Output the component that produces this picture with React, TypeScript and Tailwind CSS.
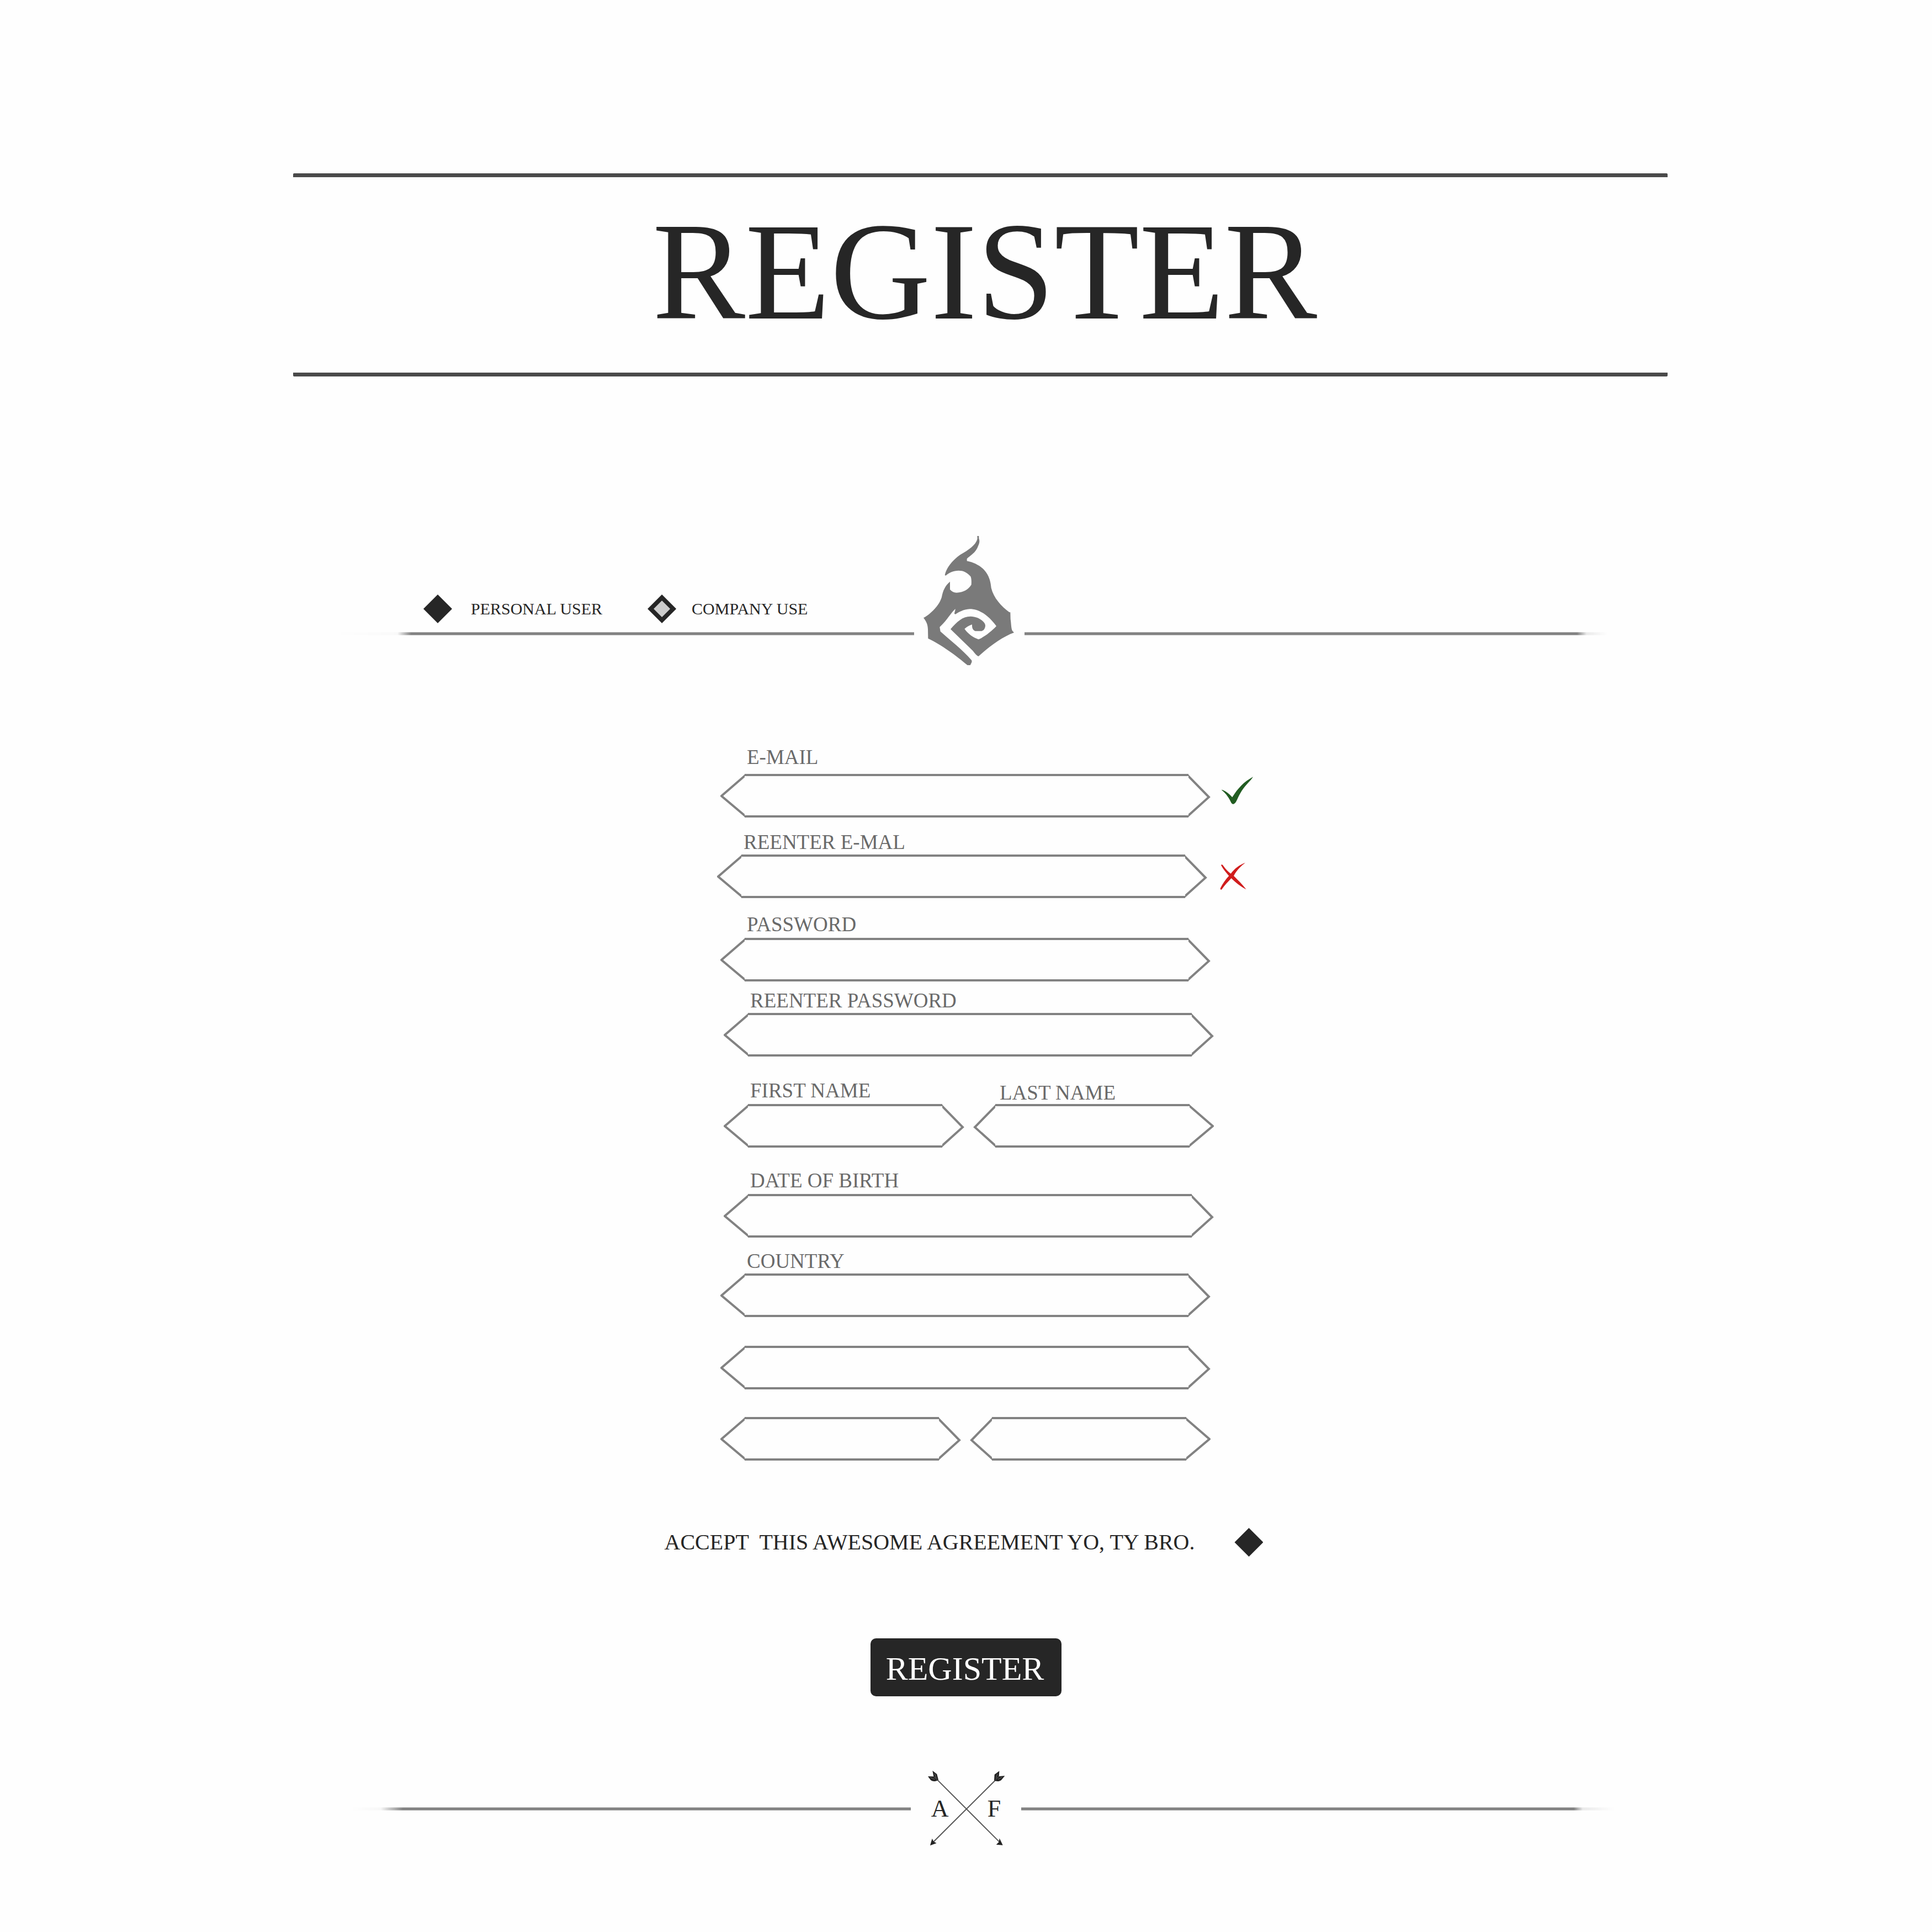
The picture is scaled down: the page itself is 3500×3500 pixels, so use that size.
import type { ReactNode } from "react";

const DIAMOND =
  "grid size-[52px] shrink-0 cursor-pointer appearance-none place-content-center bg-[#262626] [clip-path:polygon(50%_0,100%_50%,50%_100%,0_50%)] before:size-[30px] before:bg-[#cccccc] before:[clip-path:polygon(50%_0,100%_50%,50%_100%,0_50%)] checked:before:hidden";

const LABEL = "block h-10 pl-12 text-[37px] leading-10 text-[#6a6a6a]";

/* Pointed end cap of a field; the wide cap is 44px, the narrow one 40px. */
function WideCap({ flip }: { flip?: boolean }) {
  return (
    <svg
      viewBox="0 0 44 79"
      className={flip ? "h-[79px] w-11 shrink-0 -scale-x-100" : "h-[79px] w-11 shrink-0"}
      fill="none"
      stroke="#828282"
      strokeWidth="4"
      aria-hidden="true"
    >
      <path d="M46 2 L2 40 L46 77" />
    </svg>
  );
}

function NarrowCap({ flip }: { flip?: boolean }) {
  return (
    <svg
      viewBox="0 0 40 79"
      className={flip ? "h-[79px] w-10 shrink-0" : "h-[79px] w-10 shrink-0 -scale-x-100"}
      fill="none"
      stroke="#828282"
      strokeWidth="4"
      aria-hidden="true"
    >
      <path d="M42 2 L3 42 L42 77" />
    </svg>
  );
}

type FieldProps = { id: string; name: string; type?: string; mirrored?: boolean };

function HexInput({ id, name, type = "text", mirrored }: FieldProps) {
  return (
    <div className="flex w-full shrink-0">
      {mirrored ? <NarrowCap flip /> : <WideCap />}
      <input
        id={id}
        name={id}
        type={type}
        aria-label={name}
        className="h-[79px] min-w-0 flex-1 border-y-[4px] border-[#828282] bg-transparent text-[37px] text-[#262626] outline-none"
      />
      {mirrored ? <WideCap flip /> : <NarrowCap />}
    </div>
  );
}

function Check() {
  return (
    <svg viewBox="93 36 192 237" className="h-[79px] w-16 shrink-0" role="img" aria-label="Valid">
      <path
        fill="#215c21"
        d="M98 122 C112 122 140 142 157 163 C172 138 188 117 207 98 C225 80 247 65 270 52 C262 67 252 74 243 85 C215 115 200 140 184 175 C178 187 172 200 162 200 C153 200 150 190 144 178 C134 158 118 138 98 122 Z"
      />
    </svg>
  );
}

function Cross() {
  return (
    <svg viewBox="78 474 192 237" className="h-[79px] w-16 shrink-0" role="img" aria-label="Invalid">
      <path
        fill="#d01c1c"
        d="M99 532 C103 526 108 530 112 536 C124 553 139 569 152 578 C172 552 198 530 231 519 C208 536 185 558 168 590 C188 610 212 632 236 664 C206 648 176 625 155 603 C138 622 118 640 103 664 C98 668 93 662 96 656 C108 632 125 608 142 590 C128 574 112 556 99 532 Z"
      />
    </svg>
  );
}

function Logo() {
  return (
    <svg viewBox="108 84 600 720" className="h-60 w-[200px] shrink-0" role="img" aria-label="Flame emblem">
      <path
        fill="#7a7a7a"
        d="M451 93 L460 93 L460 106 C466 122 462 134 457 145 C450 165 440 180 424 192 C412 203 400 210 395 217 L395 229 C440 238 478 260 500 292 C518 318 524 345 527 375 C540 430 582 475 625 507 L631 508 L632 545 C636 570 635 595 642 608 L651 618 C590 640 520 690 458 747 C450 745 440 735 428 718 L306 599 C340 560 370 530 415 530 C455 530 495 558 495 580 C494 598 485 610 470 610 L440 610 C428 604 422 595 423 574 C405 580 390 590 382 598 C400 625 430 645 458 655 C490 642 530 610 555 583 C520 535 470 490 410 490 C375 492 350 508 333 518 L327 516 C327 507 332 500 332 489 C308 510 290 548 247 588 L251 612 C305 660 370 710 420 768 C425 776 418 785 413 795 L398 795 C340 745 250 680 184 650 L183 600 C182 570 172 555 159 538 C200 515 245 470 258 425 C265 390 275 365 303 341 L303 384 C315 396 325 402 340 401 C375 400 402 385 419 358 C420 340 420 325 415 313 C395 290 375 281 350 281 C320 281 300 292 280 308 L275 306 C282 265 325 212 375 185 C420 160 450 130 452 106 Z"
      />
    </svg>
  );
}

function Arrows() {
  return (
    <svg viewBox="30 57 600 462" className="absolute inset-0 h-full w-full" aria-hidden="true">
      <g stroke="#555555" strokeWidth="6" fill="none">
        <path d="M172 128 L514 470" />
        <path d="M492 130 L150 470" />
      </g>
      <g fill="#222222">
        <path d="M530 485 L494 482 L509 468 L512 448 Z" />
        <path d="M135 487 L146 449 L154 466 L170 474 Z" />
        <path d="M148 80 L172 99 L180 130 C168 140 150 140 138 131 L123 111 L154 112 Z" />
        <path d="M511 82 L485 101 L483 133 C495 141 512 139 522 131 L541 108 L509 111 Z" />
      </g>
      <g stroke="#8a8a8a" strokeWidth="2" fill="none">
        <path d="M155 113 L174 129 M160 96 L168 120 M136 118 L160 127" />
        <path d="M509 112 L490 129 M500 98 L494 120 M526 116 L504 127" />
      </g>
    </svg>
  );
}

type RowProps = { children: ReactNode; className: string };

function Row({ children, className }: RowProps) {
  return <div className={`w-[888px] max-w-full ${className}`}>{children}</div>;
}

const RULE = "h-[6px] border-y border-[#b4b4b4] bg-[#828282]";

export default function App() {
  return (
    <div className="min-h-screen bg-[#fefefe] pt-[314px] pb-36 font-['Liberation_Serif',serif] text-[#262626]">
      <header className="pl-[52px]">
        <div className="mx-auto max-w-[2490px] rounded-xs border-y-[7px] border-[#4a4a4a] pb-3 pl-4 text-center">
          <h1 className="text-[252px] leading-[342px]">REGISTER</h1>
        </div>
      </header>

      <form>
        <div className="mt-[286px] pl-3">
          <div className="mx-auto flex max-w-[2312px] items-end">
            <div className="min-w-0 flex-1 pb-[57px]">
              <div
                role="radiogroup"
                aria-label="Account type"
                className="flex items-center gap-[82px] pb-4 pl-[167px] text-[30px] leading-10 whitespace-nowrap"
              >
                <label className="flex items-center gap-[34px]">
                  <input type="radio" name="account" defaultChecked className={DIAMOND} />
                  PERSONAL USER
                </label>
                <label className="flex items-center gap-7">
                  <input type="radio" name="account" className={DIAMOND} />
                  COMPANY USE
                </label>
              </div>
              <div
                className={`${RULE} [mask-image:linear-gradient(to_right,transparent,rgb(0_0_0/0.04)_120px,black_145px)]`}
              />
            </div>
            <Logo />
            <div className="min-w-0 flex-1 pb-[57px]">
              <div
                className={`${RULE} [mask-image:linear-gradient(to_left,transparent,rgb(0_0_0/0.16)_38px,black_55px)]`}
              />
            </div>
          </div>
        </div>

        <div className="mt-36 pr-0.5">
          <div className="mx-auto flex w-[900px] max-w-full flex-col">
            <Row className="self-center">
              <label htmlFor="email" className={`${LABEL} mb-2.5`}>E-MAIL</label>
              <div className="flex gap-[18px]">
                <HexInput id="email" name="E-MAIL" type="email" />
                <Check />
              </div>
            </Row>
            <Row className="mt-[25px] self-start">
              <label htmlFor="email2" className={`${LABEL} mb-0.5`}>REENTER E-MAL</label>
              <div className="flex gap-[18px]">
                <HexInput id="email2" name="REENTER E-MAL" type="email" />
                <Cross />
              </div>
            </Row>
            <Row className="mt-7 self-center">
              <label htmlFor="password" className={`${LABEL} mb-1`}>PASSWORD</label>
              <HexInput id="password" name="PASSWORD" type="password" />
            </Row>
            <Row className="mt-[15px] self-end">
              <label htmlFor="password2" className={`${LABEL} mb-0.5`}>REENTER PASSWORD</label>
              <HexInput id="password2" name="REENTER PASSWORD" type="password" />
            </Row>
            <Row className="mt-[42px] flex items-end gap-4 self-end">
              <div className="min-w-0 flex-1">
                <label htmlFor="first" className={`${LABEL} mb-1`}>FIRST NAME</label>
                <HexInput id="first" name="FIRST NAME" />
              </div>
              <div className="min-w-0 flex-1">
                <label htmlFor="last" className={LABEL}>LAST NAME</label>
                <HexInput id="last" name="LAST NAME" mirrored />
              </div>
            </Row>
            <Row className="mt-10 self-end">
              <label htmlFor="birth" className={`${LABEL} mb-1`}>DATE OF BIRTH</label>
              <HexInput id="birth" name="DATE OF BIRTH" />
            </Row>
            <Row className="mt-[23px] self-center">
              <label htmlFor="country" className={`${LABEL} mb-0.5`}>COUNTRY</label>
              <HexInput id="country" name="COUNTRY" />
            </Row>
            <Row className="mt-[52px] self-center">
              <HexInput id="address" name="Address" />
            </Row>
            <Row className="mt-[50px] flex gap-4 self-center">
              <div className="min-w-0 flex-1">
                <HexInput id="city" name="City" />
              </div>
              <div className="min-w-0 flex-1">
                <HexInput id="postcode" name="Postcode" mirrored />
              </div>
            </Row>
          </div>
        </div>

        <div className="mt-[122px] flex justify-center pr-2">
          <label className="flex items-center gap-[72px] text-[40px] leading-10 whitespace-pre">
            {"ACCEPT  THIS AWESOME AGREEMENT YO, TY BRO."}
            <input type="checkbox" name="agreement" defaultChecked className={DIAMOND} />
          </label>
        </div>

        <div className="mt-[148px] flex justify-center">
          <button
            type="submit"
            className="h-[105px] cursor-pointer rounded-[10px] bg-[#262626] pt-1 pr-8 pl-7 text-[60px] leading-[100px] text-white"
          >
            REGISTER
          </button>
        </div>
      </form>

      <footer className="mx-auto mt-[127px] flex max-w-[2350px] items-center">
        <div
          className={`${RULE} min-w-0 flex-1 [mask-image:linear-gradient(to_right,transparent_60px,rgb(0_0_0/0.06)_115px,black_155px)]`}
        />
        <div className="relative flex h-[154px] w-[200px] shrink-0 items-center justify-center gap-[70px] text-[44px] leading-none">
          <Arrows />
          <span>A</span>
          <span>F</span>
        </div>
        <div
          className={`${RULE} min-w-0 flex-1 [mask-image:linear-gradient(to_left,transparent,rgb(0_0_0/0.16)_58px,black_74px)]`}
        />
      </footer>
    </div>
  );
}
